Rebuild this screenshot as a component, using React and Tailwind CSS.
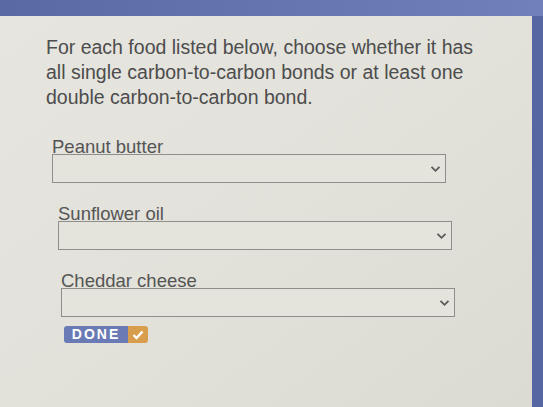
import React from 'react';

const foods = [
  { name: 'Peanut butter', shift: 'ml-0' },
  { name: 'Sunflower oil', shift: 'ml-[6px]' },
  { name: 'Cheddar cheese', shift: 'ml-[9px]' },
];

function Chevron() {
  return (
    <svg width="11" height="8" viewBox="0 0 11 8" className="shrink-0">
      <path d="M1.5 1.8 L5.5 5.8 L9.5 1.8" fill="none" stroke="#5a5a5a" strokeWidth="1.8" />
    </svg>
  );
}

export default function App() {
  return (
    <div className="w-[543px] h-[407px] overflow-hidden bg-[#5d6da6] flex flex-col font-['Liberation_Sans',Arial,sans-serif]">
      <div className="h-[16px] shrink-0 bg-gradient-to-r from-[#5a69a3] to-[#7180b8]" />
      <div className="flex flex-1">
        <div className="w-[532px] bg-gradient-to-br from-[#e6e5df] via-[#e2e1da] to-[#dcdbd3] pt-[19px] pl-[46px]">
          <p className="text-[19.5px] leading-[25px] text-[#4d4d4d] w-[445px]">
            For each food listed below, choose whether it has all single carbon-to-carbon bonds or at least one
            double carbon-to-carbon bond.
          </p>

          <div className="mt-[30px] pl-[6px] flex flex-col gap-[24px]">
            {foods.map((f) => (
              <div key={f.name} className={f.shift}>
                <div className="text-[18.5px] leading-[14px] text-[#555]">{f.name}</div>
                <div className="w-[394px] h-[29px] border border-[#8e8e8a] bg-[#e4e3dc] flex items-center justify-end pr-[4px]">
                  <Chevron />
                </div>
              </div>
            ))}
          </div>

          <div className="mt-[9px] ml-[18px] flex h-[17px] w-[84px] rounded-[3px] overflow-hidden">
            <div className="flex-1 bg-[#6a7ab4] flex items-center justify-center text-white font-bold text-[14px] tracking-[2px]">
              DONE
            </div>
            <div className="w-[20px] bg-[#d99d4e] flex items-center justify-center">
              <svg width="12" height="10" viewBox="0 0 12 10">
                <path d="M1.5 5 L4.5 8 L10.5 1.5" fill="none" stroke="#fff" strokeWidth="2.4" />
              </svg>
            </div>
          </div>
        </div>
        <div className="flex-1 bg-[#5566a2]" />
      </div>
    </div>
  );
}
